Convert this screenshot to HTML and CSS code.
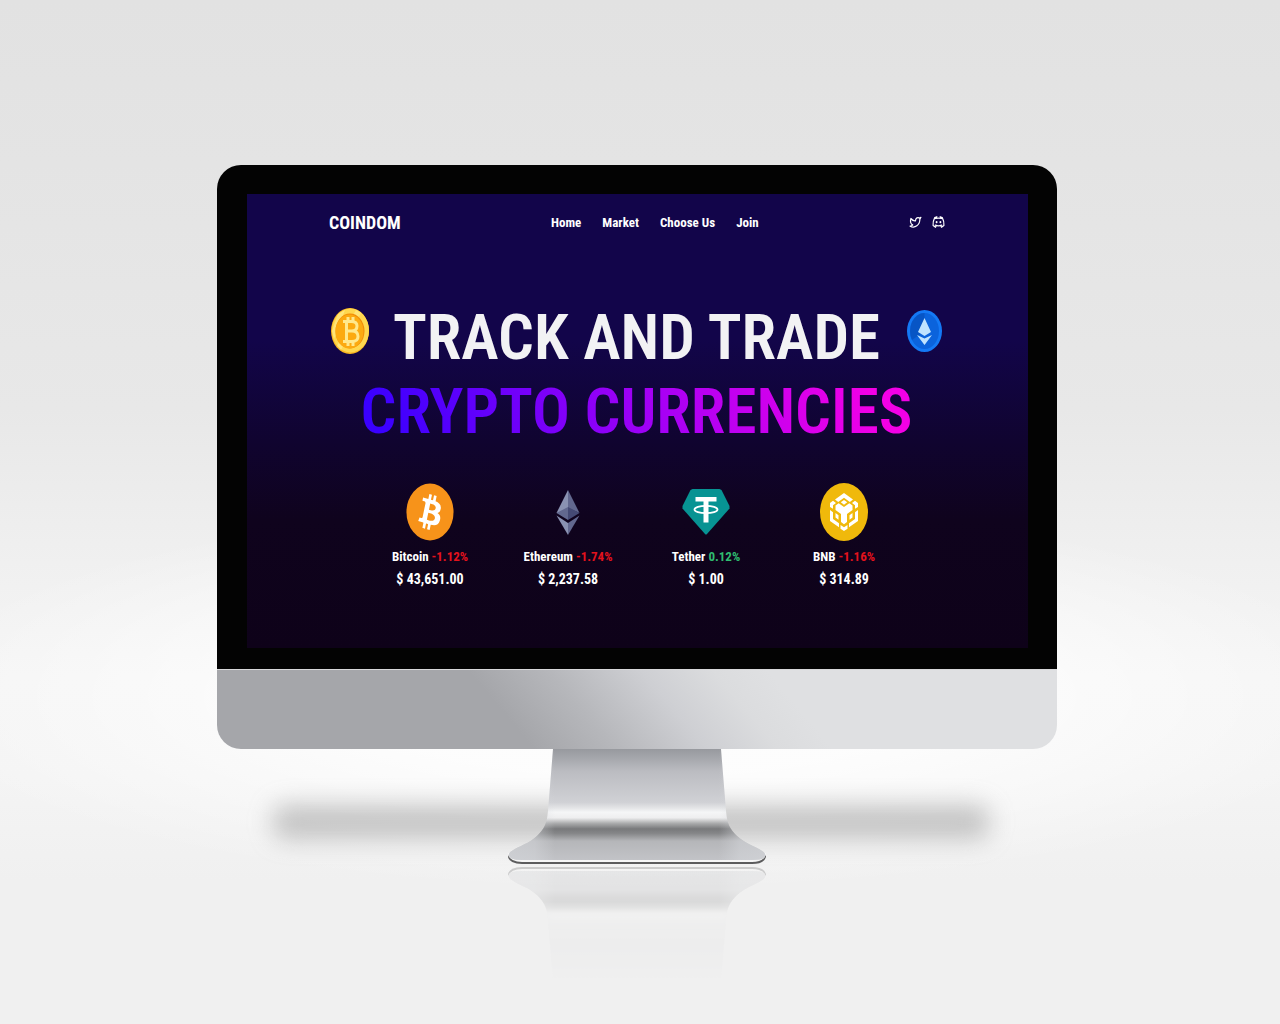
FILE: index.html
```html
<!DOCTYPE html>
<html lang="en">
<head>
<meta charset="utf-8">
<title>Coindom</title>
<link rel="stylesheet" href="styles.css">
</head>
<body>
<main class="stage">
  <div class="monitor">
    <div class="bezel">
      <div class="screen">
        <header class="topbar">
          <a class="logo" href="#">COINDOM</a>
          <nav class="menu">
            <a href="#">Home</a>
            <a href="#market">Market</a>
            <a href="#choose">Choose Us</a>
            <a href="#join">Join</a>
          </nav>
          <div class="social">
            <a href="#" aria-label="Twitter"><svg viewBox="0 0 24 24" width="13" height="14" preserveAspectRatio="none" fill="none" stroke="#fff" stroke-width="2.200" stroke-linejoin="round"><path d="M22 4c0 1-2 2.500-2 3.500.300 9-9 16.500-18 11.500 2.500 0 4-.6 5-2-4-1-5-6-3.500-11C6 9 9 10.500 12 10c-.4-5 5-7 7.500-4.500z"/></svg></a>
            <a href="#" aria-label="Discord"><svg viewBox="0 0 24 24" width="13" height="14" preserveAspectRatio="none" fill="none" stroke="#fff" stroke-width="2.200" stroke-linecap="round" stroke-linejoin="round"><path d="M8 5l1-2-4 1.500C3 8 1.500 12 2 18l4.500 3L8 18M16 5l-1-2 4 1.500C21 8 22.500 12 22 18l-4.500 3L16 18M6.500 6c3.500-1 7.500-1 11 0M6 17.500c4 1.300 8 1.300 12 0"/><path stroke-width="3.500" d="M8.500 12v.5M15.500 12v.5"/></svg></a>
          </div>
        </header>

        <section class="hero">
          <h1 class="headline">
            <span>TRACK AND TRADE</span>
            <span class="accent">CRYPTO CURRENCIES</span>
          </h1>
          <svg class="coin coin-left" viewBox="0 0 38 46" width="38" height="46" aria-hidden="true">
            <ellipse cx="19" cy="23" rx="19" ry="23" fill="#fbb922"/>
            <ellipse cx="19.500" cy="22.500" rx="18.500" ry="22" fill="#ffd84f"/>
            <path d="M7 6L14 2 3 31 1 23zM25 2l5 3L10 42l-4-4z" fill="#fff09a" opacity=".55"/>
            <ellipse cx="19" cy="23" rx="14.500" ry="17.500" fill="#f08b08"/>
            <ellipse cx="18.500" cy="23.500" rx="14" ry="17" fill="#fcaa10"/>
            <path d="M12 13.500h8.500c3.500 0 5.500 1.500 5.500 4.500s-2 5-5.500 5H16h5c4 0 6 2 6 5.500S25 33.500 21 33.500h-9M15.500 13v21M17 9v4M22 9v4M17 34v4M22 34v4" fill="none" stroke="#ffe88c" stroke-width="3"/>
          </svg>
          <svg class="coin coin-right" viewBox="0 0 35 42" width="35" height="42" aria-hidden="true">
            <ellipse cx="17.500" cy="21" rx="17.500" ry="21" fill="#1479f5"/>
            <ellipse cx="17.500" cy="21" rx="14.500" ry="18" fill="#0b63dc"/>
            <path d="M5 30A14.500 18 0 0 1 17.500 3v18z" fill="#0755c5"/>
            <path d="M17.500 8l6.500 14-6.500 4-6.500-4zM10 25l7.500 3.500L25 25l-7.500 10z" fill="#bfe3ff"/>
          </svg>
        </section>

        <section class="prices" id="market">
          <article class="price">
            <svg viewBox="0 0 32 32" width="48" height="58" preserveAspectRatio="none" aria-hidden="true"><circle cx="16" cy="16" r="15.700" fill="#f7931a"/><path fill="#fff" d="M23.189 14.020c.314-2.096-1.283-3.223-3.465-3.975l.708-2.840-1.728-.43-.69 2.765c-.454-.114-.92-.22-1.385-.326l.695-2.783L15.596 6l-.708 2.839c-.376-.086-.746-.17-1.104-.26l.002-.009-2.384-.595-.46 1.846s1.283.294 1.256.312c.7.175.826.638.805 1.006l-.806 3.235c.048.012.11.030.18.057l-.183-.045-1.130 4.532c-.086.212-.303.531-.793.410.018.025-1.256-.313-1.256-.313l-.858 1.978 2.250.561c.418.105.828.215 1.231.318l-.715 2.872 1.727.43.708-2.840c.472.127.93.245 1.378.357l-.706 2.828 1.728.43.715-2.866c2.948.558 5.164.333 6.097-2.333.752-2.146-.037-3.385-1.588-4.192 1.130-.26 1.980-1.003 2.207-2.538zm-3.950 5.538c-.533 2.147-4.148.986-5.320.695l.95-3.805c1.172.293 4.929.872 4.370 3.110zm.535-5.569c-.487 1.953-3.495.96-4.470.717l.86-3.450c.975.243 4.118.696 3.610 2.733z"/></svg>
            <p>Bitcoin <span class="down">-1.12%</span></p>
            <p class="amount">$ 43,651.00</p>
          </article>
          <article class="price">
            <svg viewBox="0 0 48 58" width="48" height="58" aria-hidden="true"><path fill="#8a92b2" d="M24 7v22.500L12.500 30z"/><path fill="#62688f" d="M24 7l11.500 23L24 25z"/><path fill="#62688f" d="M12.500 30L24 24v13z"/><path fill="#454a75" d="M35.500 30L24 24v13z"/><path fill="#8a92b2" d="M12.500 32.500L24 40v12z"/><path fill="#62688f" d="M35.500 32.500L24 40v12z"/></svg>
            <p>Ethereum <span class="down">-1.74%</span></p>
            <p class="amount">$ 2,237.58</p>
          </article>
          <article class="price">
            <svg viewBox="0 0 48 58" width="48" height="58" aria-hidden="true"><path fill="#079393" d="M10.500 6h27l2 1L47.500 23v2.500L25 51q-1 1-2 0L.5 25.500V23L8.500 7z"/><path fill="#fff" d="M13.500 14h21v4.500h-8v21h-5v-21h-8z"/><ellipse cx="24" cy="26.500" rx="11.500" ry="3.700" fill="none" stroke="#fff" stroke-width="1.800"/></svg>
            <p>Tether <span class="up">0.12%</span></p>
            <p class="amount">$ 1.00</p>
          </article>
          <article class="price">
            <svg viewBox="0 0 48 58" width="48" height="58" aria-hidden="true"><ellipse cx="24" cy="29" rx="24" ry="29" fill="#f0b90b"/><g fill="#fff"><path d="M24 10l9 6.500-3.200 2.400L24 14.700l-5.800 4.200-3.200-2.400z"/><path d="M24 17l3.200 2.300L24 21.700l-3.200-2.400z"/><path d="M13 17.800l3 2.200-3 2.200v3.600L10 24v-4zM35 17.800l-3 2.200 3 2.200v3.600l3-1.800v-4z"/><path d="M15.500 22.500l3.200-2.200L24 24l5.300-3.700 3.200 2.200V27L27 31v8l-3 2.200L21 39v-8l-5.500-4z"/><path d="M10 27l3 2.200v6.800l6 4.200v4L10 38zM38 27l-3 2.200v6.800l-6 4.200v4l9-6.200z"/><path d="M15.500 30l3 2.200v4.500l-3-2.200zM32.500 30l-3 2.200v4.500l3-2.200z"/><path d="M20.500 42l3.500 2.300 3.500-2.300v3.800L24 48l-3.500-2.200z"/></g></svg>
            <p>BNB <span class="down">-1.16%</span></p>
            <p class="amount">$ 314.89</p>
          </article>
        </section>
      </div>
    </div>
    <div class="chin"></div>
  </div>

  <div class="floor">
    <svg class="stand" viewBox="0 0 260 245" width="260" height="245" aria-hidden="true">
      <defs>
        <linearGradient id="metal" x1="0" y1="0" x2="0" y2="1">
          <stop offset="0" stop-color="#97999e"/><stop offset=".06" stop-color="#a1a3a8"/><stop offset=".2" stop-color="#bbbcc1"/><stop offset=".48" stop-color="#d0d1d5"/><stop offset=".53" stop-color="#e3e4e6"/><stop offset=".57" stop-color="#f5f6f7"/><stop offset=".62" stop-color="#eeeeef"/><stop offset=".67" stop-color="#aaabac"/><stop offset=".72" stop-color="#78797b"/><stop offset=".76" stop-color="#858688"/><stop offset=".83" stop-color="#b5b6b9"/><stop offset="1" stop-color="#c2c3c7"/>
        </linearGradient>
        <linearGradient id="sheen" x1="0" y1="0" x2="1" y2="0">
          <stop offset="0" stop-color="#d6d8dc" stop-opacity=".6"/><stop offset=".1" stop-color="#d6d8dc" stop-opacity=".5"/><stop offset=".18" stop-color="#d6d8dc" stop-opacity="0"/><stop offset=".82" stop-color="#d6d8dc" stop-opacity="0"/><stop offset=".9" stop-color="#d6d8dc" stop-opacity=".5"/><stop offset="1" stop-color="#d6d8dc" stop-opacity=".6"/>
        </linearGradient>
        <linearGradient id="fade" gradientUnits="userSpaceOnUse" x1="0" y1="114" x2="0" y2="0">
          <stop offset="0" stop-color="#fff" stop-opacity=".26"/><stop offset=".35" stop-color="#fff" stop-opacity=".18"/><stop offset=".5" stop-color="#fff" stop-opacity=".08"/><stop offset="1" stop-color="#fff" stop-opacity="0"/>
        </linearGradient>
        <mask id="mirror"><rect width="260" height="120" fill="url(#fade)"/></mask>
        <path id="outline" d="M46 0h168l5 62c1 13 4 18 11 25 9 9 25 12 28 18q2 6-13 6H15q-15 0-13-6c3-6 19-9 28-18 7-7 10-12 11-25z"/>
        <g id="foot">
          <path d="M1 105v3q2 7 14 7h230q12 0 14-7v-3z" fill="#5c5c5d"/>
          <path d="M1 104v2q3 7 14 7h230q11 0 14-7v-2z" fill="#f6f6f6"/>
          <use href="#outline" fill="url(#metal)"/>
          <use href="#outline" fill="url(#sheen)"/>
        </g>
      </defs>
      <use href="#foot"/>
      <g transform="translate(0 233) scale(1 -1)"><g mask="url(#mirror)"><use href="#foot"/></g></g>
    </svg>
  </div>
</main>
</body>
</html>
```
FILE: styles.css
```css
* { box-sizing: border-box; }

body {
  margin: 0;
  min-height: 100vh;
  font-family: "Roboto Condensed", "Liberation Sans Narrow", "Liberation Sans", sans-serif;
  font-weight: 700;
  color: #fff;
  background:
    radial-gradient(ellipse 58% 19% at 50% 68%, rgba(255, 255, 255, .8) 40%, rgba(255, 255, 255, 0) 100%),
    linear-gradient(180deg, #e2e2e2 0, #e4e4e4 16%, #e8e8e8 40%, #f0f0f0 55%, #f5f5f5 66%, #f4f4f4 76%, #f0f0f0 86%);
}

a { color: inherit; text-decoration: none; }

.stage {
  display: flex;
  flex-direction: column;
  padding: 165px 223px 28px 217px;
}

.bezel {
  padding: 29px 29px 21px 30px;
  background: #030303;
  border-radius: 24px 24px 0 0;
}

.screen {
  padding: 16px 83px 58px 82px;
  background: linear-gradient(180deg, #12054a 0, #12054a 32%, #10042f 55%, #0f031d 72%, #0e0219 100%);
}

.chin {
  height: 80px;
  border-top: 1px solid #d8d8da;
  border-radius: 0 0 24px 24px;
  background: linear-gradient(50deg, #a5a6aa 0, #a5a6aa 35%, #b6b7bb 44%, #cecfd3 54%, #dbdcde 62%, #dfe0e2 68%, #dfe0e2 100%);
}

.topbar {
  display: flex;
  justify-content: space-between;
  align-items: center;
  height: 24px;
}

.logo { font-size: 18px; }

.menu {
  display: flex;
  gap: 21px;
  font-size: 13px;
}

.social {
  display: flex;
  gap: 10px;
}

.social svg { display: block; }

.hero {
  display: grid;
  grid-template-columns: auto 1fr auto;
  grid-template-rows: 74px 74px;
  margin-top: 67px;
  padding: 0 3px 0 2px;
}

.headline {
  grid-area: 1 / 1 / 3 / 4;
  display: flex;
  flex-direction: column;
  align-items: center;
  margin: 0;
  font-size: 63px;
  font-weight: 600;
  line-height: 74px;
  white-space: nowrap;
  color: #f2f2f4;
}

.accent {
  color: transparent;
  background: linear-gradient(68deg, #3a00ff 5%, #a800f5 55%, #f300e6 92%);
  background-clip: text;
  -webkit-background-clip: text;
}

.coin {
  align-self: center;
  margin-bottom: 14px;
}

.coin-left { grid-area: 1 / 1; }
.coin-right { grid-area: 1 / 3; }

.prices {
  display: grid;
  grid-template-columns: repeat(4, 1fr);
  margin: 34px 32px 0;
}

.price {
  display: flex;
  flex-direction: column;
  align-items: center;
  font-size: 13px;
  line-height: 22px;
  white-space: nowrap;
}

.price svg { margin-bottom: 5px; }
.price p { margin: 0; }
.price .amount { font-size: 14px; }
.down { color: #e4121c; }
.up { color: #2fbd70; }

.floor {
  position: relative;
  display: flex;
  justify-content: center;
}

.floor::before {
  content: "";
  position: absolute;
  top: 56px;
  left: 56px;
  right: 68px;
  height: 34px;
  border-radius: 12px;
  background: rgba(120, 120, 120, .4);
  filter: blur(12px);
}

.stand { position: relative; }
```
